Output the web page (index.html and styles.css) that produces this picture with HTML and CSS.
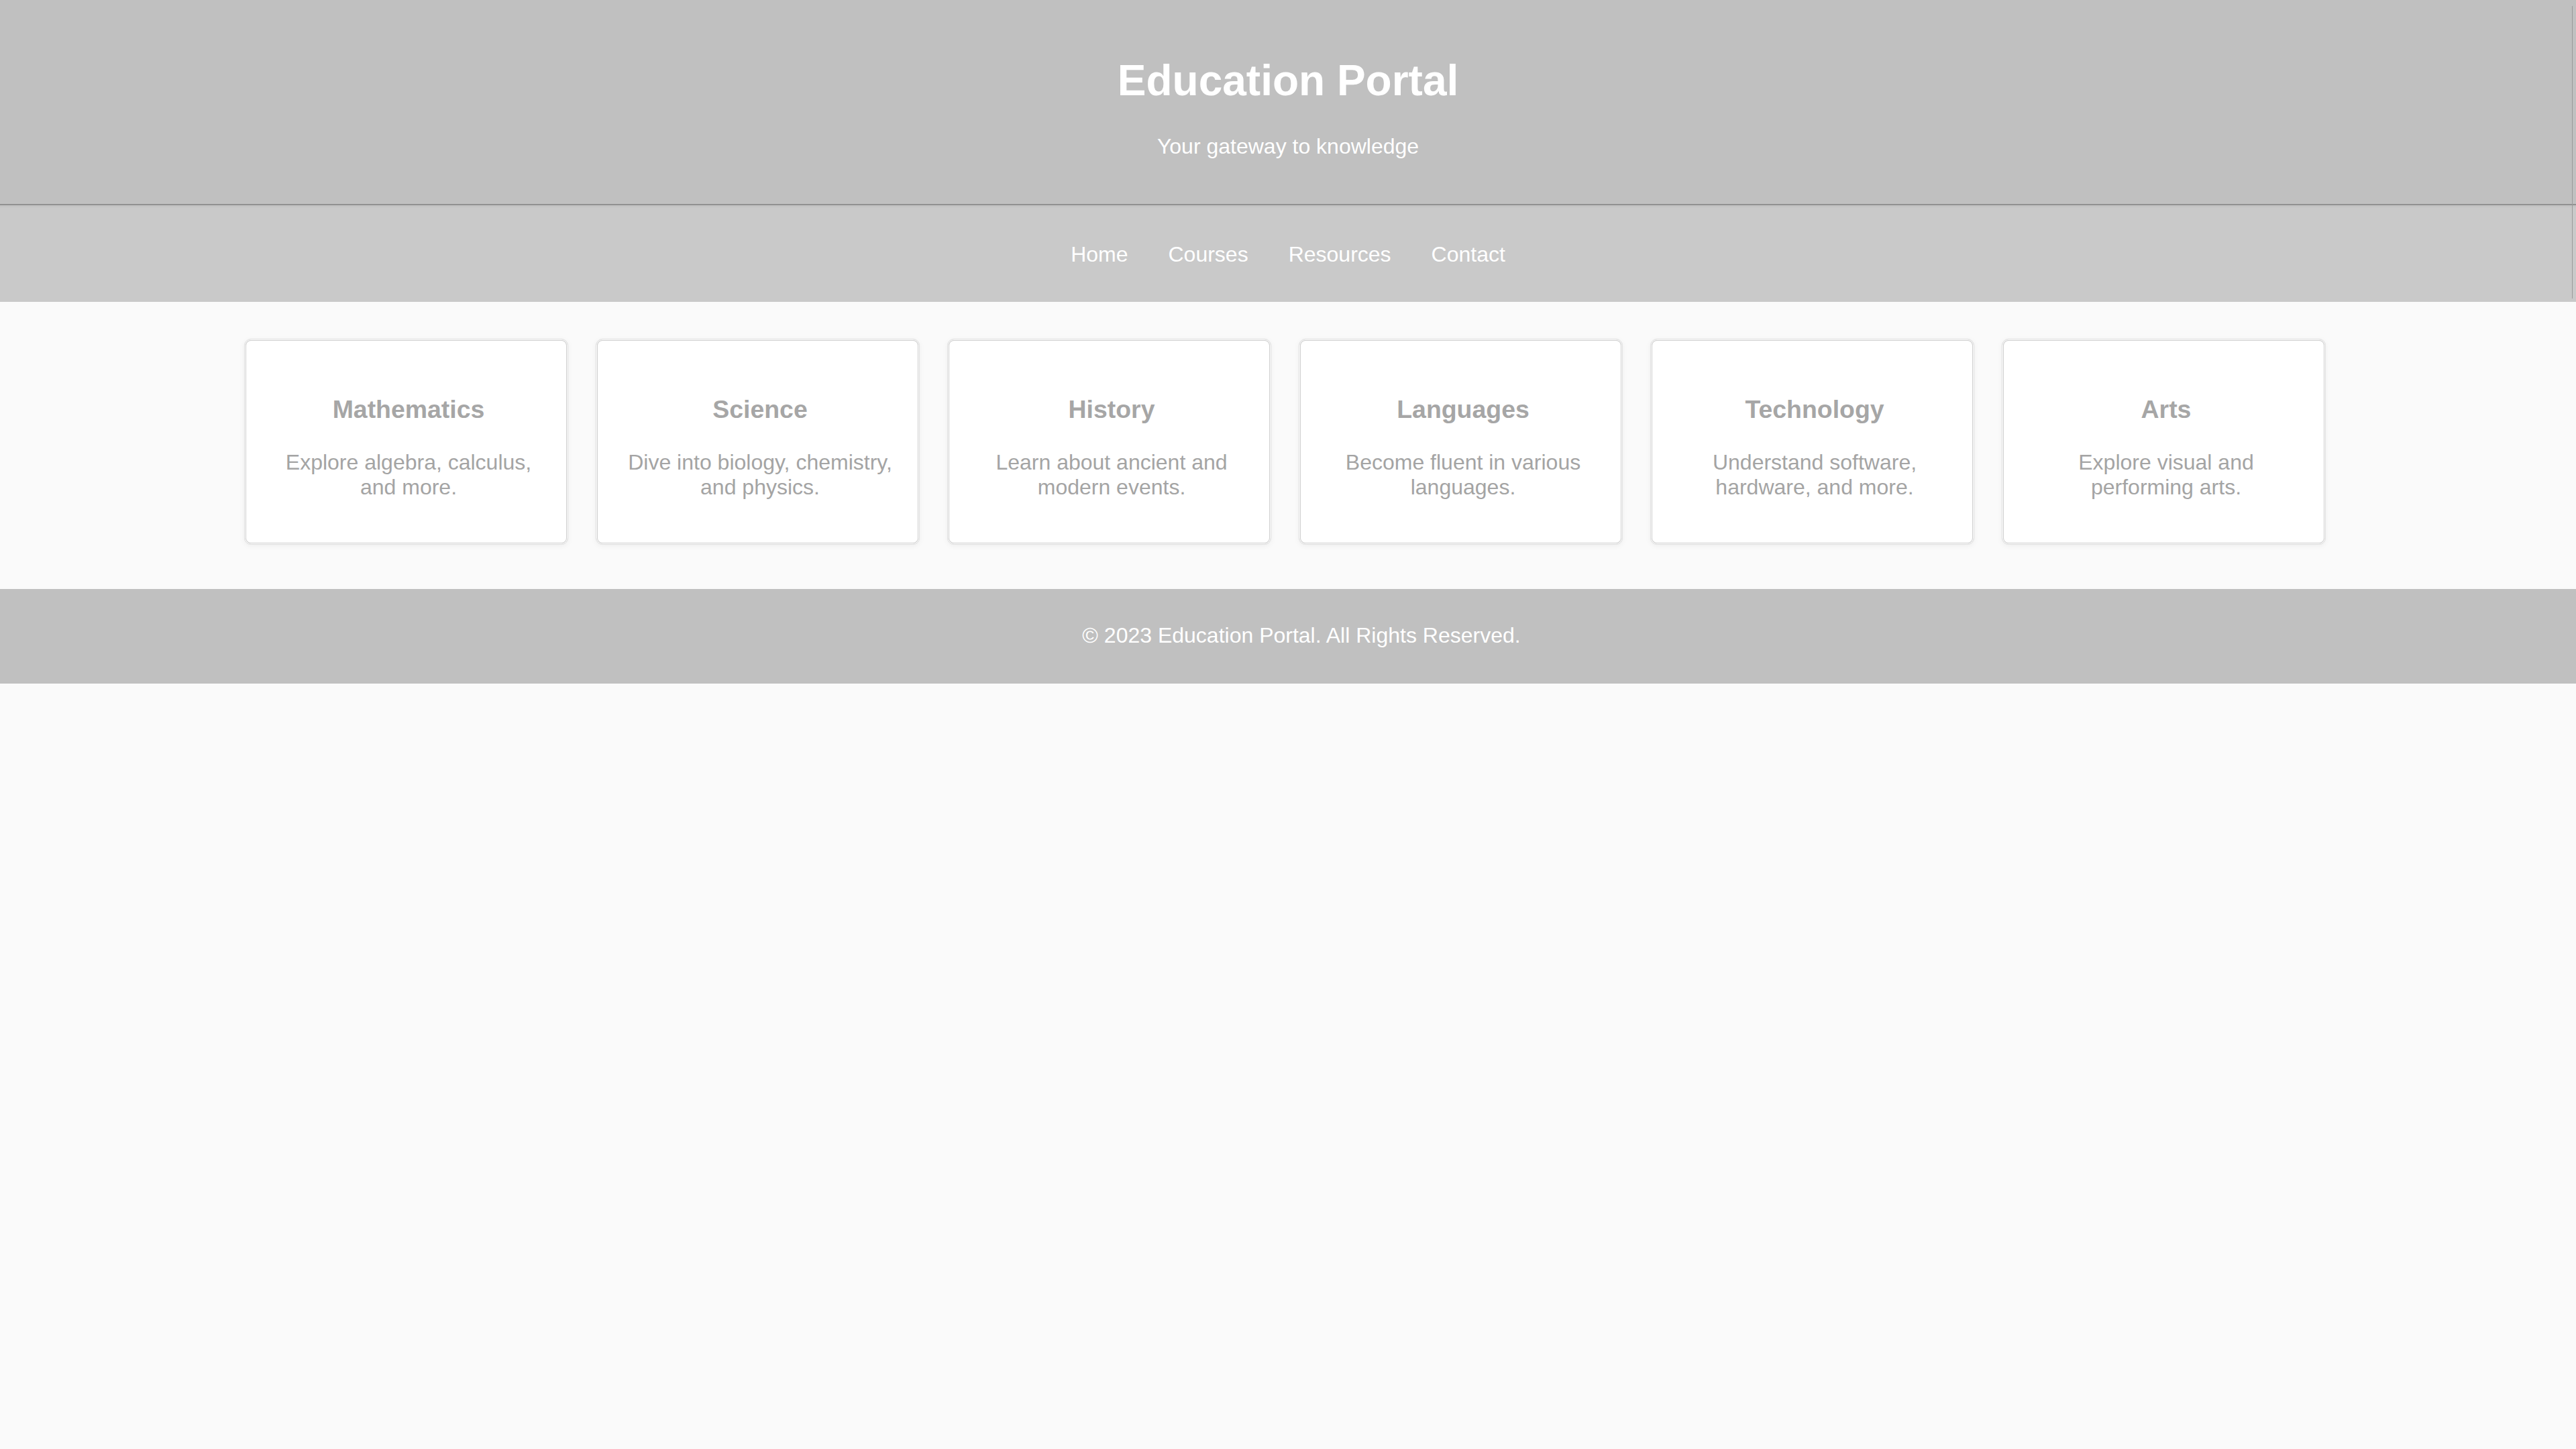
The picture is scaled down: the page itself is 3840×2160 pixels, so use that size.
FILE: index.html
```html
<!DOCTYPE html>
<html lang="en">
<head>
<meta charset="utf-8">
<title>Education Portal</title>
<link rel="stylesheet" href="styles.css">
</head>
<body>
<div class="edge-line"></div>
<header class="site-header">
  <h1 class="site-title">Education Portal</h1>
  <p class="site-tagline">Your gateway to knowledge</p>
</header>
<nav class="site-nav">
  <a class="nav-link" href="#">Home</a>
  <a class="nav-link" href="#">Courses</a>
  <a class="nav-link" href="#">Resources</a>
  <a class="nav-link" href="#">Contact</a>
</nav>
<main class="subjects">
  <div class="card">
    <h3 class="card-title">Mathematics</h3>
    <p class="card-text">Explore algebra, calculus, and more.</p>
  </div>
  <div class="card">
    <h3 class="card-title">Science</h3>
    <p class="card-text">Dive into biology, chemistry, and physics.</p>
  </div>
  <div class="card">
    <h3 class="card-title">History</h3>
    <p class="card-text">Learn about ancient and modern events.</p>
  </div>
  <div class="card">
    <h3 class="card-title">Languages</h3>
    <p class="card-text">Become fluent in various languages.</p>
  </div>
  <div class="card">
    <h3 class="card-title">Technology</h3>
    <p class="card-text">Understand software, hardware, and more.</p>
  </div>
  <div class="card">
    <h3 class="card-title">Arts</h3>
    <p class="card-text">Explore visual and performing arts.</p>
  </div>
</main>
<footer class="site-footer">
  <p class="footer-text">© 2023 Education Portal. All Rights Reserved.</p>
</footer>
</body>
</html>
```

FILE: styles.css
```css
* {
  box-sizing: border-box;
}

html, body {
  margin: 0;
  padding: 0;
}

body {
  background: #fafafa;
  font-family: "Liberation Sans", Arial, sans-serif;
  color: #333;
  position: relative;
  min-height: 2160px;
}

.edge-line {
  position: absolute;
  top: 9px;
  left: 3834px;
  width: 1px;
  height: 436px;
  background: #9a9a9a;
}

.site-header {
  background: #c0c0c0;
  color: #fff;
  text-align: center;
  padding: 40px 0 35px;
  border-bottom: 2px solid #919191;
}

.site-title {
  margin: 43px 0 43px;
  font-size: 64px;
  line-height: 74px;
  font-weight: bold;
}

.site-tagline {
  margin: 0 0 32px;
  font-size: 32px;
  line-height: 37px;
}

.site-nav {
  background: #c9c9c9;
  border-top: 3px solid #c3c3c3;
  display: flex;
  justify-content: center;
  gap: 60px;
  padding: 52px 0 52px;
  font-size: 32px;
  line-height: 37px;
}

.nav-link {
  color: #fff;
  text-decoration: none;
}

.subjects {
  display: flex;
  justify-content: center;
  gap: 41px;
  padding: 55px 10px 66px 0;
}

.card {
  width: 483px;
  background: #fff;
  border: 1px solid #dedede;
  border-radius: 10px;
  box-shadow: inset 0 0 0 1px #fff, inset 0 0 0 2px #cdcdcd, 0 2px 8px rgba(0, 0, 0, 0.05);
  padding: 43px 36px 37px 44px;
  text-align: center;
}

.card-title {
  margin: 40px 0 39px;
  font-size: 37.44px;
  line-height: 43px;
  font-weight: bold;
  color: #a6a6a6;
}

.card-text {
  margin: 0 0 29px;
  font-size: 32px;
  line-height: 37px;
  color: #a4a4a4;
}

.site-footer {
  background: #c0c0c0;
  color: #fff;
  text-align: center;
  padding: 51px 0 53px 40px;
}

.footer-text {
  margin: 0;
  font-size: 32px;
  line-height: 37px;
}
```
